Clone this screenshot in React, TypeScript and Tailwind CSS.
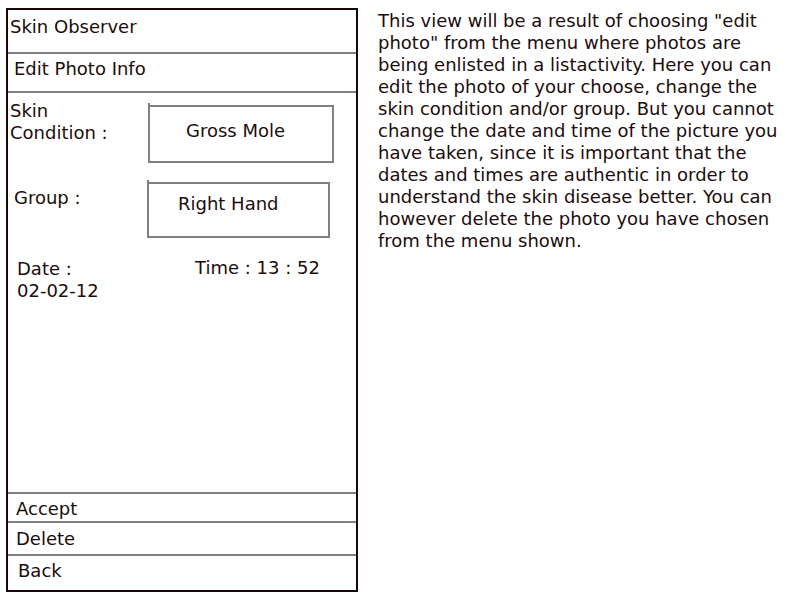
import React from "react";

const font = { fontFamily: '"DejaVu Sans", sans-serif' };

const FieldBox: React.FC<{ label: string; className: string; textClass: string }> = ({
  label,
  className,
  textClass,
}) => (
  <div className={`relative border-2 border-[#808080] ${className}`}>
    <span className="absolute -left-[2px] -top-[4px] h-[4px] w-[2px] bg-[#808080]" />
    <div className={textClass}>{label}</div>
  </div>
);

export default function App() {
  return (
    <div
      className="flex h-[600px] w-[800px] items-start bg-white text-[18px] leading-[22px] text-[#1c0c0c]"
      style={font}
    >
      {/* phone mockup */}
      <div className="ml-[6px] mt-[8px] flex h-[584px] w-[352px] flex-col border-2 border-[#1a0808]">
        <div className="h-[44px] border-b-2 border-[#808080] pl-[2px] pt-[6px]">Skin Observer</div>
        <div className="h-[39px] border-b-2 border-[#808080] pl-[6px] pt-[4px]">Edit Photo Info</div>

        <div className="flex-1 border-b-2 border-[#808080]">
          <div className="flex pt-[7px]">
            <div className="w-[140px] pl-[2px]">
              Skin
              <br />
              Condition :
            </div>
            <FieldBox
              label="Gross Mole"
              className="mt-[5px] h-[58px] w-[186px]"
              textClass="pl-[36px] pt-[13px]"
            />
          </div>

          <div className="mt-[19px] flex">
            <div className="w-[139px] pl-[6px] pt-[5px]">Group :</div>
            <FieldBox
              label="Right Hand"
              className="h-[56px] w-[183px]"
              textClass="pl-[29px] pt-[9px]"
            />
          </div>

          <div className="mt-[20px] flex pl-[9px]">
            <div className="w-[178px]">
              Date :
              <br />
              02-02-12
            </div>
            <div className="-mt-[1px]">Time : 13 : 52</div>
          </div>
        </div>

        <div className="h-[29px] border-b-2 border-[#808080] pl-[8px] pt-[4px]">Accept</div>
        <div className="h-[33px] border-b-2 border-[#808080] pl-[8px] pt-[5px]">Delete</div>
        <div className="h-[34px] pl-[10px] pt-[4px]">Back</div>
      </div>

      {/* description */}
      <p className="ml-[20px] mt-[10px] w-[402px]">
        This view will be a result of choosing "edit photo" from the menu where photos are being
        enlisted in a listactivity. Here you can edit the photo of your choose, change the skin
        condition and/or group. But you cannot change the date and time of the picture you have
        taken, since it is important that the dates and times are authentic in order to understand
        the skin disease better. You can however delete the photo you have chosen from the menu
        shown.
      </p>
    </div>
  );
}
